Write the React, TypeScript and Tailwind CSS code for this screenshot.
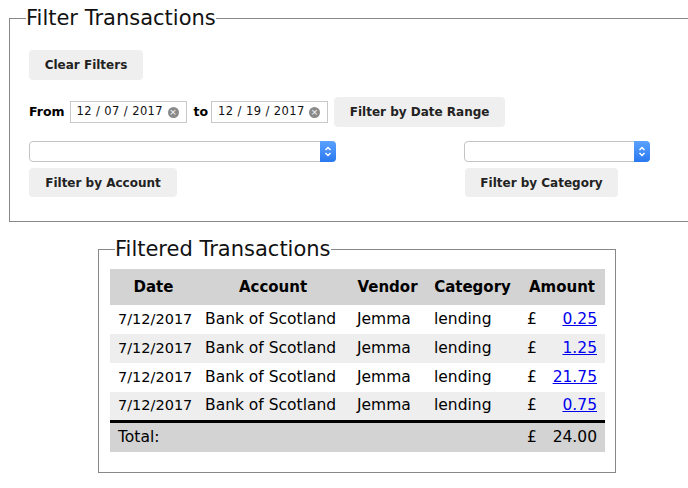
import React from "react";

const font = { fontFamily: '"DejaVu Sans", "Open Sans", sans-serif' };

function Btn({ children, className = "" }: { children: React.ReactNode; className?: string }) {
  return (
    <button
      className={`rounded-[4px] bg-[#efefef] text-[12px] font-bold text-[#222] ${className}`}
    >
      {children}
    </button>
  );
}

function DateBox({ value }: { value: string }) {
  return (
    <div className="flex h-[22px] w-[117px] items-center justify-between border border-[#c8c8c8] pl-[6px] pr-[7px] text-[11.5px] text-[#111]">
      <span className="tracking-[0.4px]">{value}</span>
      <span className="flex h-[11px] w-[11px] items-center justify-center rounded-full bg-[#8a8a8a] text-[9px] leading-none text-white">
        ×
      </span>
    </div>
  );
}

function Select({ className = "" }: { className?: string }) {
  return (
    <div
      className={`flex h-[21px] items-stretch rounded-[4px] border border-[#c4c4c4] bg-white ${className}`}
    >
      <div className="flex-1" />
      <div className="-my-px -mr-px flex w-[16px] items-center justify-center rounded-r-[4px] bg-gradient-to-b from-[#5aa2ff] to-[#2a78f0]">
        <svg width="8" height="13" viewBox="0 0 8 13" fill="none" stroke="white" strokeWidth="1.5">
          <path d="M1.5 5 L4 2.5 L6.5 5" />
          <path d="M1.5 8 L4 10.5 L6.5 8" />
        </svg>
      </div>
    </div>
  );
}

const rows = ["0.25", "1.25", "21.75", "0.75"];

export default function App() {
  return (
    <div className="min-h-[488px] w-[688px] overflow-hidden bg-white text-black" style={font}>
      <fieldset className="ml-[9px] mt-[5px] w-[720px] border border-[#888] pb-[24px] pl-4">
        <legend className="text-[21px] leading-[26px] text-[#111]">Filter Transactions</legend>
        <div className="pl-[3px]">
          <Btn className="mt-[19px] h-[30px] w-[114px]">Clear Filters</Btn>
          <div className="mt-[17px] flex h-[30px] items-center">
            <span className="mr-[5px] text-[12.5px] font-bold">From</span>
            <DateBox value="12 / 07 / 2017" />
            <span className="ml-[7px] mr-[3px] text-[12.5px] font-bold">to</span>
            <DateBox value="12 / 19 / 2017" />
            <Btn className="ml-[6px] h-[30px] w-[171px]">Filter by Date Range</Btn>
          </div>
          <div className="mt-[14px] flex">
            <div className="flex w-[435px] flex-col">
              <Select className="w-[307px]" />
              <Btn className="mt-[6px] h-[29px] w-[148px]">Filter by Account</Btn>
            </div>
            <div className="flex flex-col">
              <Select className="w-[186px]" />
              <Btn className="ml-px mt-[6px] h-[29px] w-[153px]">Filter by Category</Btn>
            </div>
          </div>
        </div>
      </fieldset>

      <fieldset className="ml-[98px] mt-[14px] w-[518px] border border-[#888] pb-[20px] pl-4">
        <legend className="text-[21px] leading-[26px] text-[#111]">Filtered Transactions</legend>
        <table className="-ml-[5px] mt-[7px] w-[495px] table-fixed border-collapse text-[15.5px]">
          <colgroup>
            <col className="w-[87px]" />
            <col className="w-[152px]" />
            <col className="w-[77px]" />
            <col className="w-[93px]" />
            <col className="w-[86px]" />
          </colgroup>
          <thead>
            <tr className="h-[36px] bg-[#d3d3d3] text-[15px] font-bold">
              <th className="px-2">Date</th>
              <th className="px-2">Account</th>
              <th className="px-2">Vendor</th>
              <th className="px-2">Category</th>
              <th className="px-2">Amount</th>
            </tr>
          </thead>
          <tbody>
            {rows.map((amt, i) => (
              <tr key={i} className={`h-[29px] ${i % 2 === 1 ? "bg-[#eeeeee]" : "bg-white"}`}>
                <td className="px-2 text-[14.5px] whitespace-nowrap">7/12/2017</td>
                <td className="px-2 whitespace-nowrap">Bank of Scotland</td>
                <td className="px-2">Jemma</td>
                <td className="px-2">lending</td>
                <td className="px-2">
                  <div className="flex justify-between">
                    <span>£</span>
                    <a href="#" className="text-[#0000ee] underline">
                      {amt}
                    </a>
                  </div>
                </td>
              </tr>
            ))}
            <tr className="h-[31px] border-t-[3px] border-black bg-[#d3d3d3]">
              <td className="px-2">Total:</td>
              <td />
              <td />
              <td />
              <td className="px-2">
                <div className="flex justify-between">
                  <span>£</span>
                  <span>24.00</span>
                </div>
              </td>
            </tr>
          </tbody>
        </table>
      </fieldset>
    </div>
  );
}
